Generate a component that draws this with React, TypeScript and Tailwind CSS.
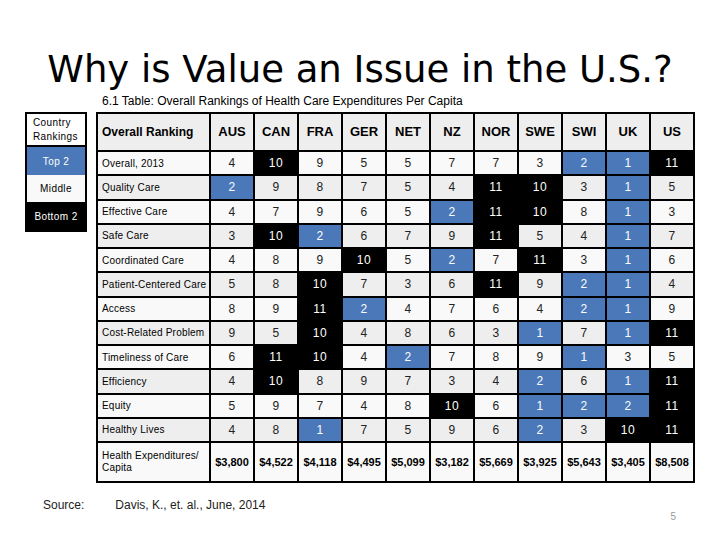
import React from "react";

type Mark = "w" | "b" | "k";

const countries = ["AUS", "CAN", "FRA", "GER", "NET", "NZ", "NOR", "SWE", "SWI", "UK", "US"];

// each value: number, then colour mark (b = top 2 blue, k = bottom 2 black)
const rows: { label: string; cells: [number, Mark][] }[] = [
    { label: "Overall, 2013", cells: [[4, "w"], [10, "k"], [9, "w"], [5, "w"], [5, "w"], [7, "w"], [7, "w"], [3, "w"], [2, "b"], [1, "b"], [11, "k"]] },
    { label: "Quality Care", cells: [[2, "b"], [9, "w"], [8, "w"], [7, "w"], [5, "w"], [4, "w"], [11, "k"], [10, "k"], [3, "w"], [1, "b"], [5, "w"]] },
    { label: "Effective Care", cells: [[4, "w"], [7, "w"], [9, "w"], [6, "w"], [5, "w"], [2, "b"], [11, "k"], [10, "k"], [8, "w"], [1, "b"], [3, "w"]] },
    { label: "Safe Care", cells: [[3, "w"], [10, "k"], [2, "b"], [6, "w"], [7, "w"], [9, "w"], [11, "k"], [5, "w"], [4, "w"], [1, "b"], [7, "w"]] },
    { label: "Coordinated Care", cells: [[4, "w"], [8, "w"], [9, "w"], [10, "k"], [5, "w"], [2, "b"], [7, "w"], [11, "k"], [3, "w"], [1, "b"], [6, "w"]] },
    { label: "Patient-Centered Care", cells: [[5, "w"], [8, "w"], [10, "k"], [7, "w"], [3, "w"], [6, "w"], [11, "k"], [9, "w"], [2, "b"], [1, "b"], [4, "w"]] },
    { label: "Access", cells: [[8, "w"], [9, "w"], [11, "k"], [2, "b"], [4, "w"], [7, "w"], [6, "w"], [4, "w"], [2, "b"], [1, "b"], [9, "w"]] },
    { label: "Cost-Related Problem", cells: [[9, "w"], [5, "w"], [10, "k"], [4, "w"], [8, "w"], [6, "w"], [3, "w"], [1, "b"], [7, "w"], [1, "b"], [11, "k"]] },
    { label: "Timeliness of Care", cells: [[6, "w"], [11, "k"], [10, "k"], [4, "w"], [2, "b"], [7, "w"], [8, "w"], [9, "w"], [1, "b"], [3, "w"], [5, "w"]] },
    { label: "Efficiency", cells: [[4, "w"], [10, "k"], [8, "w"], [9, "w"], [7, "w"], [3, "w"], [4, "w"], [2, "b"], [6, "w"], [1, "b"], [11, "k"]] },
    { label: "Equity", cells: [[5, "w"], [9, "w"], [7, "w"], [4, "w"], [8, "w"], [10, "k"], [6, "w"], [1, "b"], [2, "b"], [2, "b"], [11, "k"]] },
    { label: "Healthy Lives", cells: [[4, "w"], [8, "w"], [1, "b"], [7, "w"], [5, "w"], [9, "w"], [6, "w"], [2, "b"], [3, "w"], [10, "k"], [11, "k"]] },
];

const spending = ["$3,800", "$4,522", "$4,118", "$4,495", "$5,099", "$3,182", "$5,669", "$3,925", "$5,643", "$3,405", "$8,508"];

export default function App() {
    return (
        <div className="w-[720px] h-[540px] bg-white overflow-hidden text-black font-['Liberation_Sans',Arial,sans-serif]">
            <h1 className="pt-[51px] text-center text-[37px] leading-none font-['DejaVu_Sans',sans-serif] font-normal">
                Why is Value an Issue in the U.S.?
            </h1>

            <p className="mt-[6px] pl-[102px] text-[12px] leading-[14px]">
                6.1 Table: Overall Rankings of Health Care Expenditures Per Capita
            </p>

            <div className="mt-[4px] flex items-start">
                {/* legend */}
                <div className="ml-[25px] w-[62px] border-2 border-black flex flex-col text-[10px] tracking-[0.4px]">
                    <div className="h-[33px] border-b-2 border-black bg-white flex items-center pl-[6px] leading-[14px]">
                        Country<br />Rankings
                    </div>
                    <div className="h-[28px] bg-[#4a78b8] text-white flex items-center justify-center">Top 2</div>
                    <div className="h-[27px] bg-[#f9f9f9] flex items-center justify-center">Middle</div>
                    <div className="h-[28px] bg-black text-white flex items-center justify-center">Bottom 2</div>
                </div>

                {/* rankings table */}
                <div className="ml-[9px] bg-black p-[2px] grid gap-[2px] grid-cols-[111px_repeat(11,42px)] grid-rows-[36px_repeat(12,22.25px)_38px]">
                    <div className="bg-[#eeeeee] flex items-center pl-[4px] text-[12px] font-bold">Overall Ranking</div>
                    {countries.map((c) => (
                        <div key={c} className="bg-[#eeeeee] flex items-center justify-center text-[13px] font-bold">
                            {c}
                        </div>
                    ))}

                    {rows.map((row, i) => {
                        const base = i % 2 === 0 ? "bg-[#f9f9f9]" : "bg-[#eeeeee]";
                        return (
                            <React.Fragment key={row.label}>
                                <div className={`${base} flex items-center pl-[4px] text-[10px] tracking-[0.2px]`}>{row.label}</div>
                                {row.cells.map(([n, m], j) => (
                                    <div
                                        key={j}
                                        className={`flex items-center justify-center text-[12px] tracking-[0.5px] ${
                                            m === "b" ? "bg-[#4a78b8] text-white" : m === "k" ? "bg-black text-white" : `${base} text-[#222]`
                                        }`}
                                    >
                                        {n}
                                    </div>
                                ))}
                            </React.Fragment>
                        );
                    })}

                    <div className="bg-[#f9f9f9] flex items-center pl-[4px] text-[10px] leading-[12px] tracking-[0.2px]">
                        Health Expenditures/<br />Capita
                    </div>
                    {spending.map((s) => (
                        <div key={s} className="bg-[#f9f9f9] flex items-center justify-center text-[11px] font-bold">
                            {s}
                        </div>
                    ))}
                </div>
            </div>

            <div className="mt-[15px] flex items-start text-[12px] leading-[14px] text-[#222]">
                <span className="ml-[43px]">Source:</span>
                <span className="ml-[31px]">Davis, K., et. al., June, 2014</span>
                <span className="ml-auto mr-[44px] mt-[12px] text-[10px] text-[#999]">5</span>
            </div>
        </div>
    );
}
